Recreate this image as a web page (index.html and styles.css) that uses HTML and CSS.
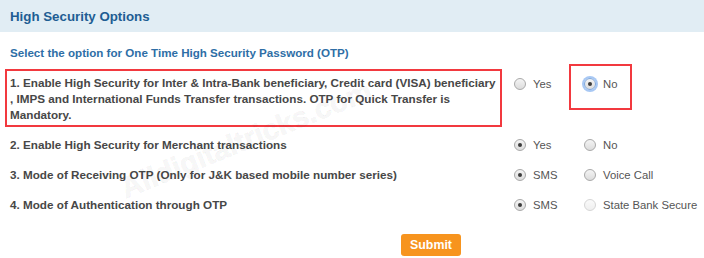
FILE: index.html
```html
<!DOCTYPE html>
<html>
<head>
<meta charset="utf-8">
<link rel="stylesheet" href="styles.css">
</head>
<body>
<div class="page">
  <div class="header">High Security Options</div>
  <div class="intro">Select the option for One Time High Security Password (OTP)</div>
  <div class="rows">
    <div class="row row-first">
      <div class="q q-marked">1. Enable High Security for Inter &amp; Intra-Bank beneficiary, Credit card (VISA) beneficiary , IMPS and International Funds Transfer transactions. OTP for Quick Transfer is Mandatory.</div>
      <label class="opt"><span class="radio"></span>Yes</label>
      <label class="opt opt-marked"><span class="radio checked focused"></span>No</label>
    </div>
    <div class="row">
      <div class="q">2. Enable High Security for Merchant transactions</div>
      <label class="opt"><span class="radio checked"></span>Yes</label>
      <label class="opt"><span class="radio"></span>No</label>
    </div>
    <div class="row">
      <div class="q">3. Mode of Receiving OTP (Only for J&amp;K based mobile number series)</div>
      <label class="opt"><span class="radio checked"></span>SMS</label>
      <label class="opt"><span class="radio"></span>Voice Call</label>
    </div>
    <div class="row">
      <div class="q">4. Mode of Authentication through OTP</div>
      <label class="opt"><span class="radio checked"></span>SMS</label>
      <label class="opt"><span class="radio disabled"></span>State Bank Secure</label>
    </div>
  </div>
  <div class="actions"><button class="submit">Submit</button></div>
  <div class="watermark">Alldigitaltricks.com</div>
</div>
</body>
</html>
```
FILE: styles.css
```css
html, body {
  margin: 0;
  padding: 0;
  background: #ffffff;
}
body {
  font-family: "Liberation Sans", Arial, sans-serif;
  width: 704px;
  height: 258px;
  overflow: hidden;
}
.page {
  position: relative;
  height: 258px;
}
.header {
  height: 32px;
  background: #e1edf4;
  display: flex;
  align-items: center;
  padding-left: 10px;
  font-size: 13.3px;
  font-weight: bold;
  color: #1e5d93;
}
.intro {
  margin-top: 13px;
  padding-left: 10px;
  line-height: 16px;
  font-size: 11.6px;
  font-weight: bold;
  color: #2e6ea6;
}
.rows {
  margin-top: 8px;
  padding-left: 5px;
}
.row {
  display: grid;
  grid-template-columns: 509px 70px auto;
  align-items: center;
  height: 30px;
}
.row-first {
  height: 58px;
  margin-bottom: 3px;
  align-items: start;
}
.q {
  font-size: 11.7px;
  font-weight: bold;
  color: #474747;
  line-height: 16px;
  padding-left: 5px;
}
.q-marked {
  width: 487px;
  padding: 4px 3px 2px 3px;
  border: 2px solid #f2393f;
}
.row-first .opt {
  margin-top: 7px;
}
.opt {
  display: flex;
  align-items: center;
  font-size: 11.3px;
  color: #555555;
  line-height: 16px;
  white-space: nowrap;
  position: relative;
}
.opt-marked::before {
  content: "";
  position: absolute;
  left: -15px;
  top: -12px;
  width: 59px;
  height: 42px;
  border: 2px solid #f2393f;
}
.radio {
  box-sizing: border-box;
  width: 12px;
  height: 12px;
  border-radius: 50%;
  border: 1px solid #a9a9a9;
  background: linear-gradient(#f4f4f4, #dcdcdc);
  margin-right: 7px;
  position: relative;
  flex: none;
}
.radio.checked::after {
  content: "";
  position: absolute;
  left: 3px;
  top: 3px;
  width: 4px;
  height: 4px;
  border-radius: 50%;
  background: #3c3c3c;
}
.radio.focused {
  box-shadow: 0 0 0 2px #a8c8f4;
  border-color: #7ea7dc;
}
.radio.disabled {
  border-color: #d6d6d6;
  background: linear-gradient(#fafafa, #efefef);
}
.actions {
  margin-top: 14px;
  padding-left: 401px;
}
.submit {
  width: 60px;
  height: 22px;
  border: 0;
  border-radius: 3px;
  background: #f7941e;
  color: #ffffff;
  font-family: "Liberation Sans", Arial, sans-serif;
  font-weight: bold;
  font-size: 12.4px;
  padding: 0;
}
.watermark {
  position: absolute;
  left: 128px;
  top: 172px;
  line-height: 32px;
  font-size: 29px;
  font-weight: bold;
  color: rgba(0, 0, 0, 0.03);
  -webkit-text-stroke: 0.7px rgba(0, 0, 0, 0.07);
  transform: rotate(-22deg);
  transform-origin: left bottom;
  white-space: nowrap;
  pointer-events: none;
}
```
